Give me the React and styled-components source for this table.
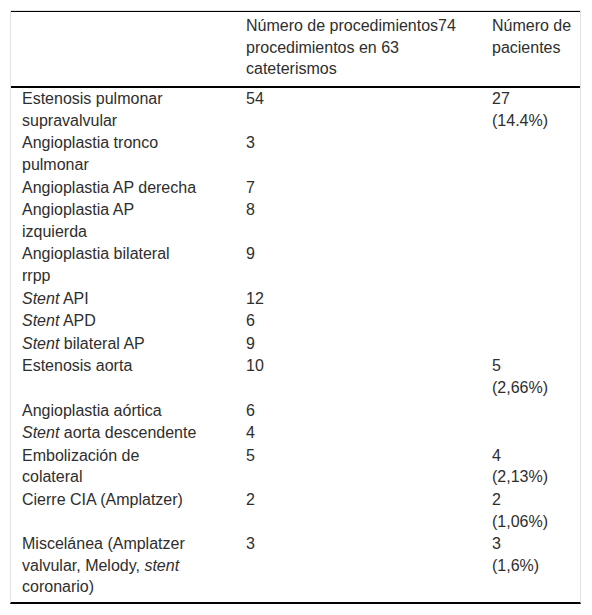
import React from "react";
import styled, { createGlobalStyle } from "styled-components";

const GlobalStyle = createGlobalStyle`
  body {
    margin: 0;
    background: #fff;
    font-family: "Liberation Sans", Arial, sans-serif;
    color: #2e2e2e;
  }
`;

const rows = [
  { name: "Estenosis pulmonar supravalvular", count: "54", patients: ["27", "(14.4%)"] },
  { name: "Angioplastia tronco pulmonar", count: "3" },
  { name: "Angioplastia AP derecha", count: "7" },
  { name: "Angioplastia AP izquierda", count: "8" },
  { name: "Angioplastia bilateral rrpp", count: "9" },
  { stent: true, name: "API", count: "12" },
  { stent: true, name: "APD", count: "6" },
  { stent: true, name: "bilateral AP", count: "9" },
  { name: "Estenosis aorta", count: "10", patients: ["5", "(2,66%)"] },
  { name: "Angioplastia aórtica", count: "6" },
  { stent: true, name: "aorta descendente", count: "4" },
  { name: "Embolización de colateral", count: "5", patients: ["4", "(2,13%)"] },
  { name: "Cierre CIA (Amplatzer)", count: "2", patients: ["2", "(1,06%)"] },
  {
    name: (
      <>
        Miscelánea (Amplatzer valvular, Melody, <em>stent</em> coronario)
      </>
    ),
    count: "3",
    patients: ["3", "(1,6%)"],
  },
];

function App() {
  return (
    <>
      <GlobalStyle />
      <Frame>
        <Table>
          <colgroup>
            <col style={{ width: 224 }} />
            <col style={{ width: 246 }} />
            <col style={{ width: 99 }} />
          </colgroup>
          <thead>
            <tr>
              <HeadCell />
              <HeadCell>Número de procedimientos74 procedimientos en 63 cateterismos</HeadCell>
              <HeadCell>Número de pacientes</HeadCell>
            </tr>
          </thead>
          <tbody>
            {rows.map((r, i) => (
              <tr key={i}>
                <Cell>
                  {r.stent && <em>Stent</em>}
                  {r.stent && " "}
                  {r.name}
                </Cell>
                <Cell>{r.count}</Cell>
                <Cell>
                  {r.patients && (
                    <>
                      {r.patients[0]}
                      <br />
                      {r.patients[1]}
                    </>
                  )}
                </Cell>
              </tr>
            ))}
          </tbody>
        </Table>
      </Frame>
    </>
  );
}

export default App;

const Frame = styled.div`
  margin: 10px 11px 0 10px;
  border: 1px solid #e2e2e2;
  border-bottom: 2px solid #000;
  padding-bottom: 4px;
`;

const Table = styled.table`
  width: 100%;
  table-layout: fixed;
  border-collapse: collapse;
  border-top: 1px solid #000;
  font-size: 16px;
  line-height: 21.6px;

  thead tr {
    border-bottom: 2px solid #000;
  }

  td:first-child,
  th:first-child {
    padding-right: 35px;
  }
  td:last-child,
  th:last-child {
    padding-right: 4px;
  }

  em {
    font-style: italic;
  }
`;

const HeadCell = styled.th`
  text-align: left;
  font-weight: normal;
  vertical-align: top;
  padding: 3px 11px 6px 11px;
`;

const Cell = styled.td`
  vertical-align: top;
  padding: 0.5px 11px 0.5px 11px;
`;
